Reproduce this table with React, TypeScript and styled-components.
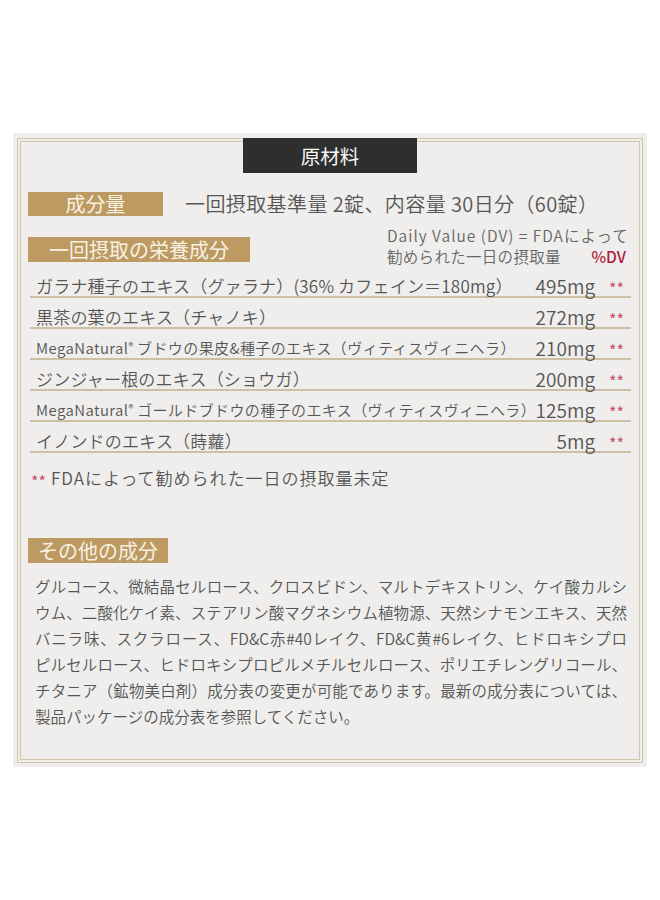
import * as React from 'react';
import styled, { createGlobalStyle } from 'styled-components';

const GlobalStyle = createGlobalStyle`
    body {
        margin: 0;
        background: #fff;
        font-family: "Noto Sans CJK JP", "Noto Sans", sans-serif;
        font-weight: 350;
        color: #555;
    }
`;

const Page = styled.div`
    padding: 133px 13px;
`;

const Panel = styled.div`
    box-sizing: border-box;
    width: 634px;
    height: 634px;
    padding: 5px 4px 4px;
    background: #efeeec;
    display: flex;
`;

const Frame = styled.div`
    flex: 1;
    min-width: 0;
    display: flex;
    flex-direction: column;
    padding: 0 7px;
    border: 4px double #d3c5a9;
`;

const Title = styled.div`
    align-self: center;
    width: 174px;
    height: 35px;
    margin-top: -4px;
    background: #2e2e2e;
    color: #f7f7f7;
    font-size: 19.5px;
    font-weight: 400;
    line-height: 35px;
    text-align: center;
`;

const Label = styled.div<{ $width?: number; $height?: number }>`
    box-sizing: border-box;
    align-self: flex-start;
    width: ${p => (p.$width ? `${p.$width}px` : 'auto')};
    height: ${p => p.$height || 25}px;
    line-height: ${p => p.$height || 25}px;
    padding: 0 10px;
    background: #bc9a62;
    color: #f8f1e2;
    font-size: 20px;
    font-weight: 400;
    text-align: center;
    white-space: nowrap;
`;

const DoseRow = styled.div`
    display: flex;
    align-items: center;
    gap: 22px;
    margin-top: 19px;
`;

const DoseText = styled.div`
    font-size: 20px;
    line-height: 24px;
    letter-spacing: 0.4px;
    color: #555;
    white-space: nowrap;
`;

const NutritionHead = styled.div`
    display: flex;
    justify-content: space-between;
    align-items: flex-end;
    margin-top: 9px;

    ${Label} {
        margin-bottom: 5px;
        align-self: flex-end;
    }
`;

const DvNote = styled.div`
    width: 240px;
    margin-right: 5px;
    font-size: 15.5px;
    line-height: 21px;
    color: #666;
    white-space: nowrap;
`;

const DvLine = styled.div<{ $wide?: boolean }>`
    display: flex;
    justify-content: space-between;
    letter-spacing: ${p => (p.$wide ? '1px' : '0.3px')};
`;

const DvMark = styled.span`
    color: #b0213c;
    font-weight: 500;
    letter-spacing: 0;
    margin-right: 1px;
`;

const Rows = styled.div`
    margin: 0 1px 0 2px;
`;

const Row = styled.div`
    display: flex;
    align-items: center;
    height: 22px;
    padding-top: 7px;
    border-bottom: 2px solid #cdbfa4;
`;

const Name = styled.div<{ $small?: boolean }>`
    flex: 1;
    min-width: 0;
    padding-left: 6px;
    font-size: ${p => (p.$small ? 15 : 17)}px;
    letter-spacing: ${p => (p.$small ? '0.4px' : '0.2px')};
    white-space: nowrap;
`;

const Reg = styled.span`
    font-size: 0.65em;
    vertical-align: 0.45em;
`;

const Amount = styled.div`
    font-size: 19px;
    text-align: right;
    white-space: nowrap;
`;

const Star = styled.span`
    box-sizing: border-box;
    display: inline-block;
    width: 36px;
    margin-top: 6px;
    padding-left: 14px;
    font-size: 16px;
    font-weight: 400;
    color: #c8506a;
`;

const Footnote = styled.div`
    margin-top: 13px;
    padding-left: 3px;
    font-size: 17px;
    line-height: 24px;
    letter-spacing: 1px;

    ${Star} {
        width: auto;
        margin-top: 0;
        padding: 0 5px 0 0;
        letter-spacing: 0;
        vertical-align: -3px;
    }
`;

const OtherLabel = styled(Label)`
    margin-top: 45px;
`;

const Paragraph = styled.div`
    margin-top: 10px;
    padding: 0 5px 0 7px;
    font-size: 15.5px;
    line-height: 26px;
    color: #555;
`;

const ParaLine = styled.div<{ $last?: boolean }>`
    white-space: nowrap;
    text-align: justify;
    text-align-last: ${p => (p.$last ? 'left' : 'justify')};
`;

const ingredients = [
    { name: <>ガラナ種子のエキス（グァラナ）(36% カフェイン＝180mg）</>, amount: '495mg' },
    { name: <>黒茶の葉のエキス（チャノキ）</>, amount: '272mg' },
    { name: <>MegaNatural<Reg>®</Reg> ブドウの果皮&amp;種子のエキス（ヴィティスヴィニヘラ）</>, amount: '210mg', small: true },
    { name: <>ジンジャー根のエキス（ショウガ）</>, amount: '200mg' },
    { name: <>MegaNatural<Reg>®</Reg> ゴールドブドウの種子のエキス（ヴィティスヴィニヘラ）</>, amount: '125mg', small: true },
    { name: <>イノンドのエキス（蒔蘿）</>, amount: '5mg' },
];

const otherLines = [
    'グルコース、微結晶セルロース、クロスビドン、マルトデキストリン、ケイ酸カルシ',
    'ウム、二酸化ケイ素、ステアリン酸マグネシウム植物源、天然シナモンエキス、天然',
    'バニラ味、スクラロース、FD&C赤#40レイク、FD&C黄#6レイク、ヒドロキシプロ',
    'ピルセルロース、ヒドロキシプロピルメチルセルロース、ポリエチレングリコール、',
    'チタニア（鉱物美白剤）成分表の変更が可能であります。最新の成分表については、',
    '製品パッケージの成分表を参照してください。',
];

const App = (): JSX.Element => {
    return (
        <Page>
            <GlobalStyle />
            <Panel>
                <Frame>
                    <Title>原材料</Title>
                    <DoseRow>
                        <Label $width={135} $height={24}>成分量</Label>
                        <DoseText>一回摂取基準量 2錠、内容量 30日分（60錠）</DoseText>
                    </DoseRow>
                    <NutritionHead>
                        <Label $width={222}>一回摂取の栄養成分</Label>
                        <DvNote>
                            <DvLine $wide>Daily Value (DV) = FDAによって</DvLine>
                            <DvLine>
                                <span>勧められた一日の摂取量</span>
                                <DvMark>%DV</DvMark>
                            </DvLine>
                        </DvNote>
                    </NutritionHead>
                    <Rows>
                        {ingredients.map((item, i) => (
                            <Row key={i}>
                                <Name $small={item.small}>{item.name}</Name>
                                <Amount>{item.amount}</Amount>
                                <Star>**</Star>
                            </Row>
                        ))}
                    </Rows>
                    <Footnote>
                        <Star>**</Star>FDAによって勧められた一日の摂取量未定
                    </Footnote>
                    <OtherLabel>その他の成分</OtherLabel>
                    <Paragraph>
                        {otherLines.map((line, i) => (
                            <ParaLine key={i} $last={i === otherLines.length - 1}>{line}</ParaLine>
                        ))}
                    </Paragraph>
                </Frame>
            </Panel>
        </Page>
    );
};

export default App;
